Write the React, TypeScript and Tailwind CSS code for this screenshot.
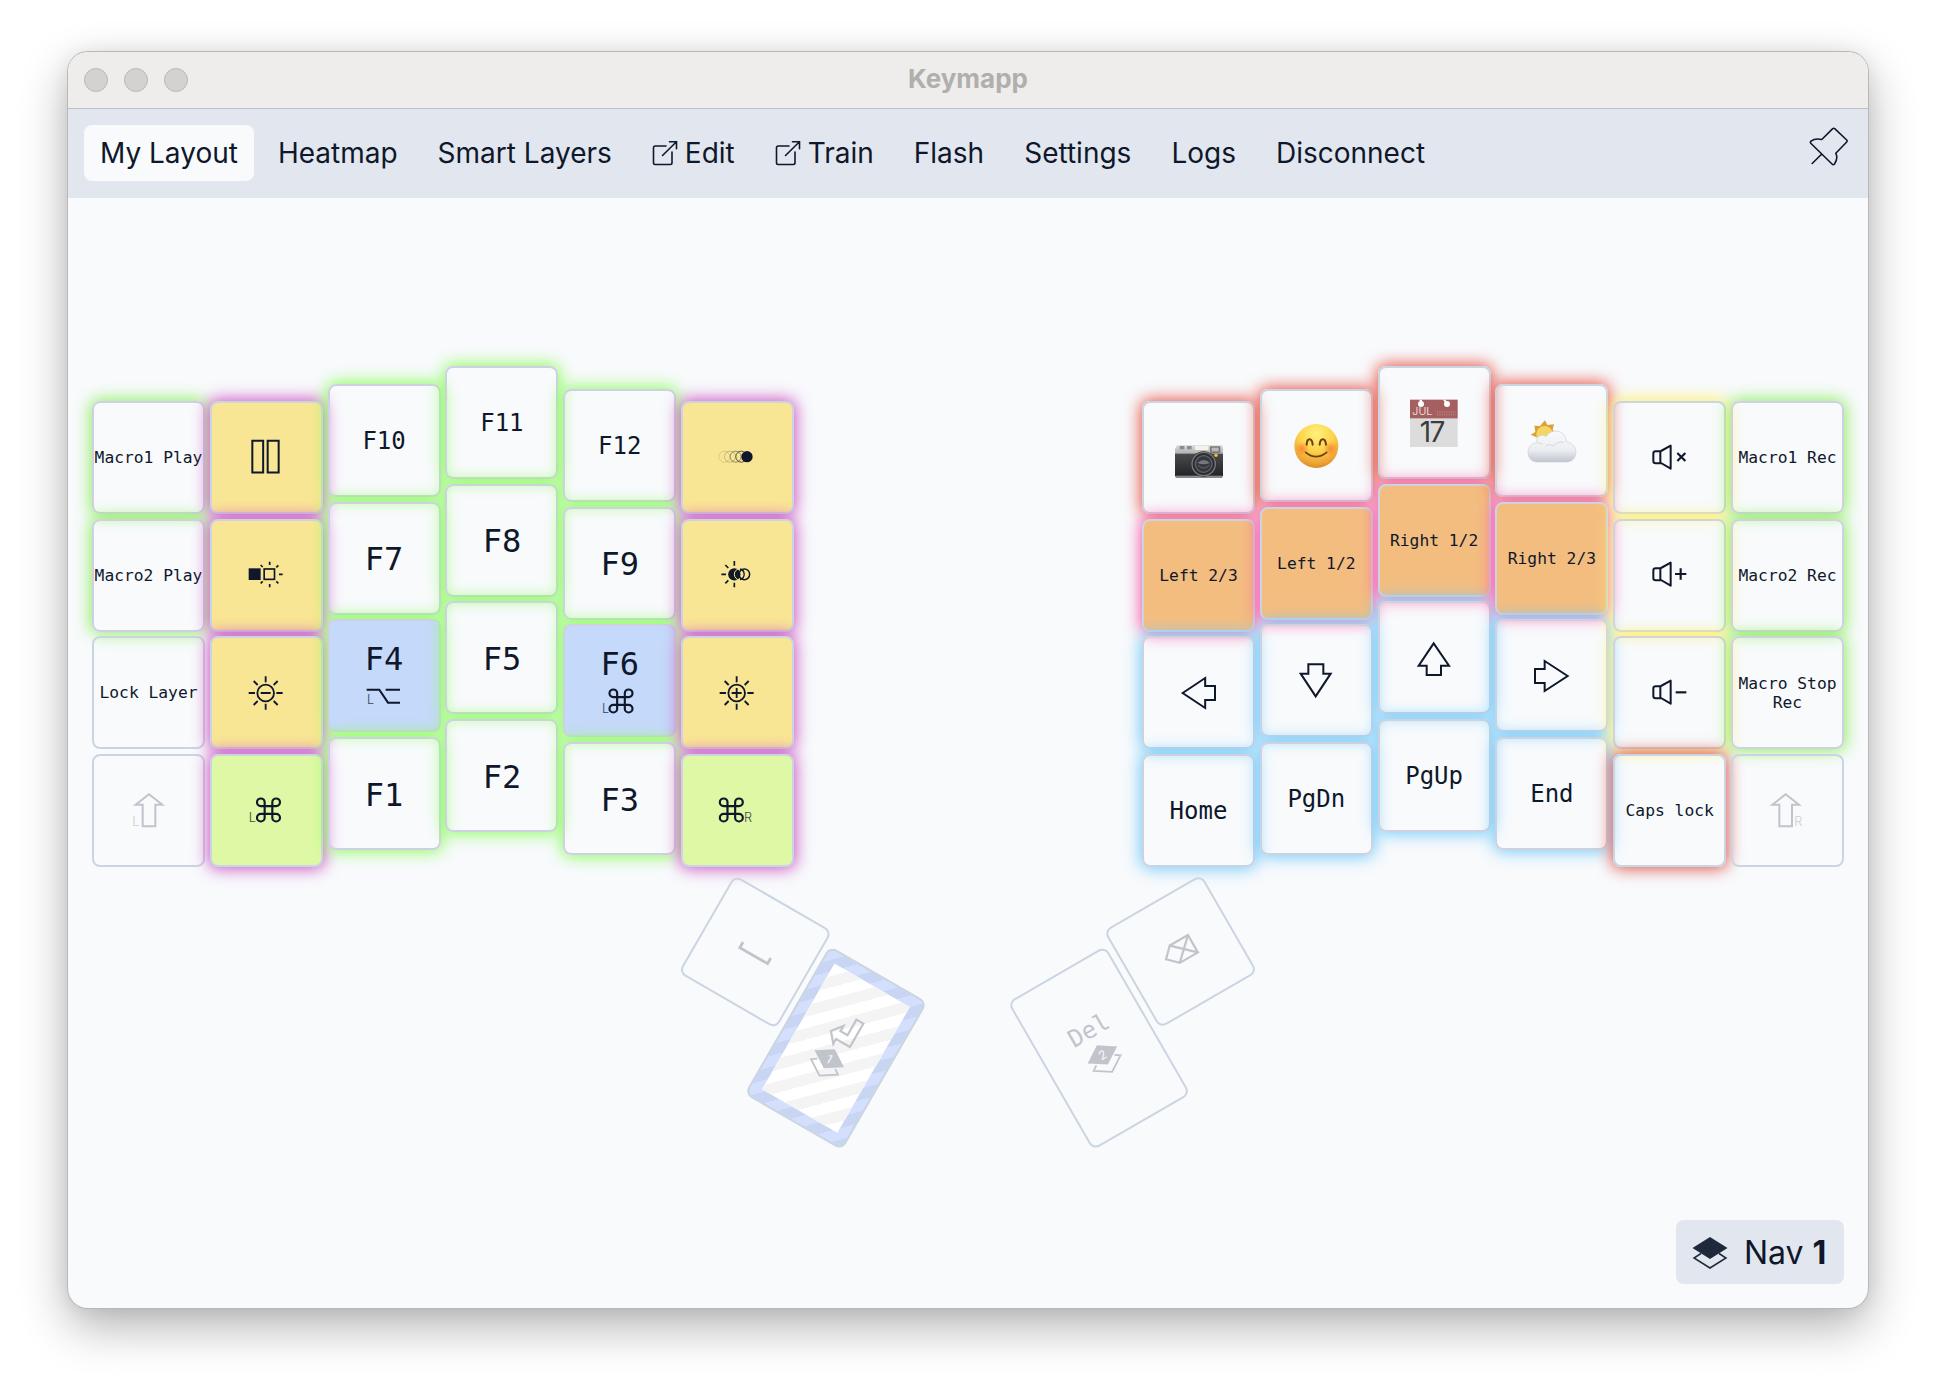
import type { ReactNode } from "react";

type Glow = "lime" | "green" | "magenta" | "red" | "pink" | "sky" | "yellow" | "crimson" | "none";
type Fill = "clear" | "amber" | "blue" | "mint" | "orange";

const GLOW: Record<Glow, string> = {
  lime: "border-[#cfd1e3] shadow-[0_0_16px_2px_#8dfc62]",
  green: "border-[#cfd1e3] shadow-[0_0_16px_2px_#92ee66]",
  magenta: "border-[#cbd5e1] shadow-[0_0_16px_2px_#cb57c2]",
  red: "border-[#cbd5e1] shadow-[0_0_16px_2px_#e8594d]",
  pink: "border-[#cbd5e1] shadow-[0_0_16px_2px_#f55aa8]",
  sky: "border-[#ced2df] shadow-[0_0_16px_2px_#76cbfa]",
  yellow: "border-[#cfd3df] shadow-[0_0_16px_2px_#fdef70]",
  crimson: "border-[#cbd5e1] shadow-[0_0_16px_2px_#dd5a50]",
  none: "border-[#cbd5e1]",
};

const FILL: Record<Fill, string> = {
  clear: "",
  amber: "bg-[#f9e694]",
  blue: "bg-[#c5d9fa]",
  mint: "bg-[#dff8a6]",
  orange: "bg-[#f3bd80]",
};

/* Key legends are drawn around the centre of the cap, three units to a pixel. */
function Art({ children, dim = false }: { children: ReactNode; dim?: boolean }) {
  return (
    <svg
      viewBox="-90 -90 180 180"
      className={`h-[60px] w-[60px] shrink-0 ${dim ? "text-[#c2c4cc]" : "text-[#0f172a]"}`}
      fill="none"
      stroke="currentColor"
      strokeWidth="6"
    >
      {children}
    </svg>
  );
}

function Sub({ x, y, children }: { x: number; y: number; children: string }) {
  return (
    <text x={x} y={y} fontSize="38" fill="currentColor" stroke="none" opacity="0.8" className="font-['Inter',sans-serif] font-light">
      {children}
    </text>
  );
}

const Pause = () => (
  <Art>
    <path d="M-41 -51.5H-8.500V43.5H-41ZM5 -51.5H38V43.5H5Z" />
  </Art>
);

const RgbMode = () => (
  <Art>
    <rect x="-52" y="-20" width="36" height="35" fill="currentColor" stroke="none" />
    <rect x="-5.500" y="-18" width="31" height="31" strokeWidth="5" />
    <path strokeWidth="5" d="M11 -40V-30M11 27V37M39 -2H50M-16 -30L-10 -24M37 -29L31 -23M-16 25L-10 19M31 19L37 25" />
  </Art>
);

const Fade = () => (
  <Art>
    <circle cx="-38" cy="-4" r="16.500" strokeWidth="1.500" opacity="0.25" />
    <circle cx="-21" cy="-4" r="16.500" strokeWidth="1.500" opacity="0.45" />
    <circle cx="-4" cy="-4" r="16.500" strokeWidth="2" opacity="0.65" />
    <circle cx="13" cy="-4" r="16.500" strokeWidth="2.500" opacity="0.85" />
    <circle cx="30" cy="-4" r="17" fill="currentColor" stroke="none" />
  </Art>
);

const Hue = () => (
  <Art>
    <path strokeWidth="5" d="M-8 -42V-28M-8 23V37M-47 -2H-33M-35 -30L-26 -21M-35 25L-26 16" />
    <circle cx="-8" cy="-2" r="18.500" fill="currentColor" stroke="none" />
    <circle cx="9" cy="-2" r="17" stroke="#f9e694" strokeWidth="3" />
    <path strokeWidth="4" d="M9 -18A16.500 16.500 0 0 1 9 14" />
    <circle cx="22" cy="-2" r="16" strokeWidth="4.500" />
  </Art>
);

const Sun = ({ plus = false }: { plus?: boolean }) => (
  <Art>
    <circle cx="-1" cy="0" r="25" strokeWidth="5.500" />
    <path
      strokeWidth="5.500"
      d="M-1 -50V-32M-1 32V50M-52 0H-33M31 0H50M-37 -36L-25 -24M23 -24L35 -36M-37 36L-25 24M23 24L35 36M-16 0H14"
    />
    {plus && <path strokeWidth="5.500" d="M-1 -15V15" />}
  </Art>
);

const commandLoop =
  "M15 6v12a3 3 0 1 0 3-3H6a3 3 0 1 0 3 3V6a3 3 0 1 0-3 3h12a3 3 0 1 0-3-3";

const Command = ({ side }: { side: "L" | "R" }) => (
  <Art>
    <g transform={side === "L" ? "translate(-38.500 -49) scale(3.830)" : "translate(-63 -49) scale(3.830)"}>
      <path d={commandLoop} strokeWidth="1.700" />
    </g>
    {side === "L" ? <Sub x={-52} y={34}>L</Sub> : <Sub x={21} y={34}>R</Sub>}
  </Art>
);

const Shift = ({ side }: { side: "L" | "R" }) => (
  <Art dim>
    <g transform={side === "R" ? "translate(-4 0)" : undefined}>
      <path d="M0 -50L40 -19H19V46H-19V-19H-40Z" />
    </g>
    {side === "L" ? <Sub x={-50} y={46}>L</Sub> : <Sub x={22} y={44}>R</Sub>}
  </Art>
);

const arrows = {
  left: "M-49 0L18.500 -45V-21H48V21H18.500V45Z",
  right: "M47 0L-22 -45V-21H-51V21H-22V45Z",
  down: "M-1 46L44 -22H22V-50H-23V-22H-46Z",
  up: "M-1 -44L45 23H21V51H-22V23H-46Z",
};

const Arrow = ({ to }: { to: keyof typeof arrows }) => (
  <Art>
    <path strokeWidth="6" d={arrows[to]} />
  </Art>
);

const Speaker = ({ mark }: { mark: string }) => (
  <Art>
    <path strokeLinejoin="round" d="M-29 -20H-43Q-50 -20 -50 -13V9Q-50 16 -43 16H-29ZM-27 -21L2 -37V32L-27 15" />
    <path strokeWidth="6.500" d={mark} />
  </Art>
);

const Camera = () => (
  <Art>
    <defs>
      <linearGradient id="cam-top" x1="0" y1="0" x2="0" y2="1">
        <stop offset="0" stopColor="#d9d9d9" />
        <stop offset="1" stopColor="#a9aaac" />
      </linearGradient>
      <linearGradient id="cam-body" x1="0" y1="0" x2="0" y2="1">
        <stop offset="0" stopColor="#4a4b4d" />
        <stop offset="1" stopColor="#222326" />
      </linearGradient>
    </defs>
    <g stroke="none">
      <path d="M-72 -28L-66 -38H70L72 -28V-8H-72Z" fill="url(#cam-top)" />
      <rect x="-58" y="-36" width="14" height="10" fill="#8c8d8f" />
      <rect x="-36" y="-36" width="14" height="10" fill="#8c8d8f" />
      <rect x="-12" y="-36" width="40" height="12" rx="2" fill="#f4f1e6" />
      <rect x="33" y="-35" width="31" height="20" rx="2" fill="#77797b" />
      <rect x="38" y="-31" width="21" height="11" fill="#b9bab6" />
      <rect x="-72" y="-13" width="144" height="68" fill="url(#cam-body)" />
      <rect x="-70" y="53" width="140" height="7" fill="#88898b" />
      <circle cx="14" cy="18" r="38" fill="#2c2d30" />
      <circle cx="51" cy="-8" r="5" fill="#f4c430" />
    </g>
    <circle cx="14" cy="18" r="35" stroke="#77797c" strokeWidth="4" />
    <circle cx="14" cy="18" r="25" stroke="#626569" strokeWidth="4" fill="#34373b" />
    <path d="M-5 15Q14 -3 33 15Q14 23 -5 15Z" fill="#73777c" stroke="none" />
    <path d="M-3 22Q14 38 31 22" stroke="#54585d" strokeWidth="4" />
  </Art>
);

const Smile = () => (
  <Art>
    <defs>
      <radialGradient id="smile" cx="0.500" cy="0.220" r="0.800">
        <stop offset="0" stopColor="#fff27c" />
        <stop offset="0.500" stopColor="#fcd24a" />
        <stop offset="0.850" stopColor="#eda233" />
        <stop offset="1" stopColor="#d98324" />
      </radialGradient>
      <radialGradient id="blush">
        <stop offset="0" stopColor="#f5792e" stopOpacity="0.750" />
        <stop offset="1" stopColor="#f5792e" stopOpacity="0" />
      </radialGradient>
    </defs>
    <circle cx="1" cy="0" r="66" fill="url(#smile)" stroke="none" />
    <circle cx="-42" cy="8" r="22" fill="url(#blush)" stroke="none" />
    <circle cx="44" cy="8" r="22" fill="url(#blush)" stroke="none" />
    <g stroke="#6b3f12" strokeWidth="6" strokeLinecap="round">
      <path d="M-28 -4C-27 -26 -12 -26 -10 -4M11 -4C13 -26 28 -26 30 -4" />
      <path d="M-31 19Q0 45 32 19" strokeWidth="5" />
    </g>
  </Art>
);

const Calendar = () => (
  <Art>
    <g stroke="none">
      <rect x="-72" y="-16" width="143" height="88" fill="#dcdcdc" />
      <rect x="-72" y="-70" width="143" height="56" fill="#a65f60" />
      <path d="M-43 -70H-36V-58H-43ZM27 -70H34L42 -58H36Z" fill="#fff" />
      <circle cx="-39" cy="-57" r="9" fill="#fff" />
      <circle cx="39" cy="-57" r="9" fill="#fff" />
      <text x="-65" y="-24" fontSize="32" fill="#e8d5d5" className="font-['Inter',sans-serif]">JUL</text>
      <text x="-43" y="58" fontSize="84" letterSpacing="-5" fill="#3c3c3c" className="font-['Inter',sans-serif]">17</text>
    </g>
    <path d="M9 -33H66M9 -25H66" stroke="#bd8080" strokeWidth="5" strokeDasharray="3 4" />
  </Art>
);

const Cloud = () => (
  <Art>
    <defs>
      <linearGradient id="cloud" x1="0" y1="0" x2="0" y2="1">
        <stop offset="0" stopColor="#f8f9fa" />
        <stop offset="0.600" stopColor="#eceef2" />
        <stop offset="1" stopColor="#bfc5cf" />
      </linearGradient>
    </defs>
    <g stroke="none">
      <path
        d="M-21 -62L-14 -48L6 -50L2 -34L10 -24L-4 -6L-40 -8L-48 -12L-64 -19L-50 -27L-53 -46L-36 -45Z"
        fill="#dda03c"
      />
      <circle cx="-22" cy="-20" r="25" fill="#f6d662" />
    </g>
    <path
      d="M-44 63C-82 62 -80 6 -44 5C-52 -14 -28 -24 -18 -13C-2 -40 42 -34 43 2C82 8 80 62 44 63Z"
      fill="url(#cloud)"
      stroke="#c9ced6"
      strokeWidth="2"
    />
    <path d="M-19 15Q-8 6 4 15Q18 -1 36 4M-42 6Q-34 5 -28 10" stroke="#d3d7de" strokeWidth="3" />
  </Art>
);

const Big = ({ children }: { children: string }) => <span className="pt-0.5 text-[32px] leading-none">{children}</span>;
const Mid = ({ children }: { children: string }) => <span className="pt-px text-[24px] leading-none">{children}</span>;
const Tiny = ({ children }: { children: string }) => (
  <span className="-mx-1 text-center text-[16.300px] leading-[19px]">{children}</span>
);

const Hold = ({ label, children }: { label: string; children: ReactNode }) => (
  <span className="flex flex-col items-center gap-[8px] pt-px">
    <Big>{label}</Big>
    <svg viewBox="-54 -42 108 84" className="h-[28px] w-[36px]" fill="none" stroke="currentColor" strokeWidth="6">
      {children}
    </svg>
  </span>
);

type KeySpec = { legend: ReactNode; glow: Glow; fill?: Fill };

const k = (legend: ReactNode, glow: Glow, fill: Fill = "clear"): KeySpec => ({ legend, glow, fill });

type Column = { drop: string; keys: KeySpec[] };

const leftColumns: Column[] = [
  {
    drop: "pt-[35px]",
    keys: [
      k(<Tiny>Macro1 Play</Tiny>, "green"),
      k(<Tiny>Macro2 Play</Tiny>, "green"),
      k(<Tiny>Lock Layer</Tiny>, "none"),
      k(<Shift side="L" />, "none"),
    ],
  },
  {
    drop: "pt-[35px]",
    keys: [
      k(<Pause />, "magenta", "amber"),
      k(<RgbMode />, "magenta", "amber"),
      k(<Sun />, "magenta", "amber"),
      k(<Command side="L" />, "magenta", "mint"),
    ],
  },
  {
    drop: "pt-[18px]",
    keys: [
      k(<Mid>F10</Mid>, "lime"),
      k(<Big>F7</Big>, "lime"),
      k(
        <Hold label="F4">
          <path d="M-52 -22H-14L12 17H48M5 -22H48" />
          <Sub x={-51} y={20}>L</Sub>
        </Hold>,
        "lime",
        "blue",
      ),
      k(<Big>F1</Big>, "lime"),
    ],
  },
  {
    drop: "pt-0",
    keys: [k(<Mid>F11</Mid>, "lime"), k(<Big>F8</Big>, "lime"), k(<Big>F5</Big>, "lime"), k(<Big>F2</Big>, "lime")],
  },
  {
    drop: "pt-[23px]",
    keys: [
      k(<Mid>F12</Mid>, "lime"),
      k(<Big>F9</Big>, "lime"),
      k(
        <Hold label="F6">
          <g transform="translate(-43 -49) scale(3.830)">
            <path d={commandLoop} strokeWidth="1.700" />
          </g>
          <Sub x={-54} y={34}>L</Sub>
        </Hold>,
        "lime",
        "blue",
      ),
      k(<Big>F3</Big>, "lime"),
    ],
  },
  {
    drop: "pt-[35px]",
    keys: [
      k(<Fade />, "magenta", "amber"),
      k(<Hue />, "magenta", "amber"),
      k(<Sun plus />, "magenta", "amber"),
      k(<Command side="R" />, "magenta", "mint"),
    ],
  },
];

const rightColumns: Column[] = [
  {
    drop: "pt-[35px]",
    keys: [
      k(<Camera />, "red"),
      k(<Tiny>Left 2/3</Tiny>, "pink", "orange"),
      k(<Arrow to="left" />, "sky"),
      k(<Mid>Home</Mid>, "sky"),
    ],
  },
  {
    drop: "pt-[23px]",
    keys: [
      k(<Smile />, "red"),
      k(<Tiny>Left 1/2</Tiny>, "pink", "orange"),
      k(<Arrow to="down" />, "sky"),
      k(<Mid>PgDn</Mid>, "sky"),
    ],
  },
  {
    drop: "pt-0",
    keys: [
      k(<Calendar />, "red"),
      k(<Tiny>Right 1/2</Tiny>, "pink", "orange"),
      k(<Arrow to="up" />, "sky"),
      k(<Mid>PgUp</Mid>, "sky"),
    ],
  },
  {
    drop: "pt-[18px]",
    keys: [
      k(<Cloud />, "red"),
      k(<Tiny>Right 2/3</Tiny>, "pink", "orange"),
      k(<Arrow to="right" />, "sky"),
      k(<Mid>End</Mid>, "sky"),
    ],
  },
  {
    drop: "pt-[35px]",
    keys: [
      k(<Speaker mark="M22 -15L46 9M46 -15L22 9" />, "yellow"),
      k(<Speaker mark="M15 -3H49M32 -20V14" />, "yellow"),
      k(<Speaker mark="M17 -2H49" />, "yellow"),
      k(<Tiny>Caps lock</Tiny>, "crimson"),
    ],
  },
  {
    drop: "pt-[35px]",
    keys: [
      k(<Tiny>Macro1 Rec</Tiny>, "green"),
      k(<Tiny>Macro2 Rec</Tiny>, "green"),
      k(<Tiny>Macro Stop Rec</Tiny>, "green"),
      k(<Shift side="R" />, "none"),
    ],
  },
];

function Half({ columns }: { columns: Column[] }) {
  return (
    <div className="flex h-[500px] w-[702px] justify-between">
      {columns.map((column, c) => (
        <div key={c} className={`flex flex-col gap-[4.700px] ${column.drop}`}>
          {column.keys.map((key, i) => (
            <div
              key={i}
              className={`flex h-[113px] w-[113px] shrink-0 items-center justify-center rounded-[8px] border-2 ${GLOW[key.glow]} ${FILL[key.fill ?? "clear"]}`}
            >
              {key.legend}
            </div>
          ))}
        </div>
      ))}
    </div>
  );
}

function LayerMark({ y, n }: { y: number; n: string }) {
  return (
    <g transform={`translate(0 ${y})`}>
      <path d="M0 -11L17 0L0 11L-17 0Z" fill="currentColor" stroke="none" />
      <path d="M-10.500 6L-15.500 9.500L0 19.500L15.500 9.500L10.500 6" strokeWidth="1.800" />
      <text y="4.500" textAnchor="middle" fontSize="12" fill="#f8fafc" stroke="none" className="font-['Inter',sans-serif]">
        {n}
      </text>
    </g>
  );
}

function LeftThumbs() {
  return (
    <div className="mt-[54px] ml-[581px] flex w-[230.500px] rotate-30 items-start gap-[4.500px] text-[#c2c4cc]">
      <div className="flex h-[113px] w-[113px] items-center justify-center rounded-[8px] border-2 border-[#cbd5e1]">
        <svg viewBox="-20 -20 40 40" className="size-10" fill="none" stroke="currentColor" strokeWidth="2.800">
          <path d="M-16 -3V3.500H16V-3" />
        </svg>
      </div>
      <div className="mt-[14px] flex h-[170.500px] w-[113px] rounded-[8px] border-2 border-[#cbd5e1] bg-[#d3dffc] bg-[repeating-linear-gradient(135deg,transparent_0_11px,rgba(100,130,160,0.1)_11px_22px)] p-[11px]">
        <div className="flex flex-1 items-center justify-center bg-white bg-[repeating-linear-gradient(135deg,transparent_0_11px,#f4f4f4_11px_22px)]">
          <svg viewBox="-25 -45 50 90" className="h-[90px] w-[50px] shrink-0" fill="none" stroke="currentColor" strokeWidth="2.200">
            <path d="M4 -34.500H12V-7.500H-4V-2L-12.500 -12L-4 -22.500V-16.500H4Z" />
            <LayerMark y={13} n="1" />
          </svg>
        </div>
      </div>
    </div>
  );
}

function RightThumbs() {
  return (
    <div className="mt-[54px] -ml-[111.500px] flex w-[231.500px] -rotate-30 items-start gap-[5.500px] text-[#c2c4cc]">
      <div className="mt-[14px] flex h-[170.500px] w-[113px] items-center justify-center rounded-[8px] border-2 border-[#cbd5e1]">
        <div className="flex flex-col items-center gap-[2px]">
          <span className="text-[24px] leading-[24px]">Del</span>
          <svg viewBox="-20 -14 40 38" className="h-[38px] w-[40px]" fill="none" stroke="currentColor">
            <LayerMark y={0} n="2" />
          </svg>
        </div>
      </div>
      <div className="flex h-[113px] w-[113px] items-center justify-center rounded-[8px] border-2 border-[#cbd5e1]">
        <svg viewBox="-20 -20 40 40" className="size-10" fill="none" stroke="currentColor" strokeWidth="2.200">
          <path d="M-6 -11H15V9H-6L-16 -1ZM-6 -11L15 9M-6 9L15 -11" />
        </svg>
      </div>
    </div>
  );
}

const External = () => (
  <svg viewBox="0 0 26 26" className="mr-[7px] size-[26px]" fill="none" stroke="currentColor" strokeWidth="1.600">
    <path d="M14 6H3.200Q1.500 6 1.500 7.700V22.800Q1.500 24.500 3.200 24.500H18.300Q20 24.500 20 22.800V12M17.500 1.700H24.500V8.700M24.500 1.700L10.500 15.500" strokeLinecap="round" />
  </svg>
);

const tabs: { label: string; external?: boolean; active?: boolean }[] = [
  { label: "My Layout", active: true },
  { label: "Heatmap" },
  { label: "Smart Layers" },
  { label: "Edit", external: true },
  { label: "Train", external: true },
  { label: "Flash" },
  { label: "Settings" },
  { label: "Logs" },
  { label: "Disconnect" },
];

export default function App() {
  return (
    <div className="h-[1392px] w-[1936px] overflow-hidden bg-white px-[68px] pt-[52px] font-['Inter',sans-serif] text-[#0f172a]">
      <div className="flex h-[1256px] w-[1800px] flex-col overflow-hidden rounded-[20px] bg-[#f8fafc] shadow-[0_0_0_1px_#b8b8b8,0_18px_48px_rgba(0,0,0,0.31),0_0_20px_rgba(0,0,0,0.07)]">
        <header className="grid h-[57px] shrink-0 grid-cols-3 items-center border-b border-[#b9bfc9] bg-[#eeedeb] px-4">
          <div className="flex gap-4">
            <span className="size-6 rounded-full border border-[#b9b8b7] bg-[#d3d2d0]" />
            <span className="size-6 rounded-full border border-[#b9b8b7] bg-[#d3d2d0]" />
            <span className="size-6 rounded-full border border-[#b9b8b7] bg-[#d3d2d0]" />
          </div>
          <h1 className="pb-[2px] text-center text-[26px] leading-none font-bold text-[#b0afae]">Keymapp</h1>
        </header>

        <nav className="flex h-[89px] shrink-0 items-start gap-2 bg-[#e2e7ef] px-4 pt-4">
          {tabs.map((tab) => (
            <a
              key={tab.label}
              className={`flex h-14 items-center rounded-[8px] px-4 text-[28px] ${tab.active ? "bg-[#f8fafc]" : ""}`}
            >
              {tab.external && <External />}
              {tab.label}
            </a>
          ))}
          <svg viewBox="0 0 40 40" className="mt-[2px] mr-[3px] ml-auto size-10" fill="none" stroke="currentColor" strokeWidth="1.600" strokeLinejoin="round" strokeLinecap="round">
            <path d="M23.700 1.600Q24.700 0.800 25.700 1.600L37.700 13Q38.500 14 37.700 15L26.800 26.300C28.500 29.500 27.500 34 25.500 37Q24.300 38.500 23 37L2 16.500Q0.800 15.300 2 14.200C4.500 12.200 9 11.700 12.800 12.500ZM12.500 27.300L3.200 36.500" />
          </svg>
        </nav>

        <main className="flex flex-1 flex-col px-[24px] pt-[168px] font-['DejaVu_Sans_Mono',monospace]">
          <div className="flex justify-between">
            <div className="w-[702px]">
              <Half columns={leftColumns} />
              <LeftThumbs />
            </div>
            <div className="w-[702px]">
              <Half columns={rightColumns} />
              <RightThumbs />
            </div>
          </div>
          <div className="mt-auto mb-6 flex h-16 w-[168px] items-center self-end rounded-[8px] bg-[#e2e7ef] pt-px pl-[15.500px] font-['Inter',sans-serif] text-[32px]">
            <svg viewBox="0 0 36 32" className="mr-[16.500px] h-[32px] w-[36px] text-[#1e293b]" fill="none" stroke="currentColor" strokeWidth="1.500">
              <path d="M18 0L35.500 11L18 22L0.500 11Z" fill="currentColor" stroke="none" />
              <path d="M9 16.500L2 21L18 31L34 21L27 16.500" />
            </svg>
            <span>
              Nav <b className="font-bold">1</b>
            </span>
          </div>
        </main>
      </div>
    </div>
  );
}
